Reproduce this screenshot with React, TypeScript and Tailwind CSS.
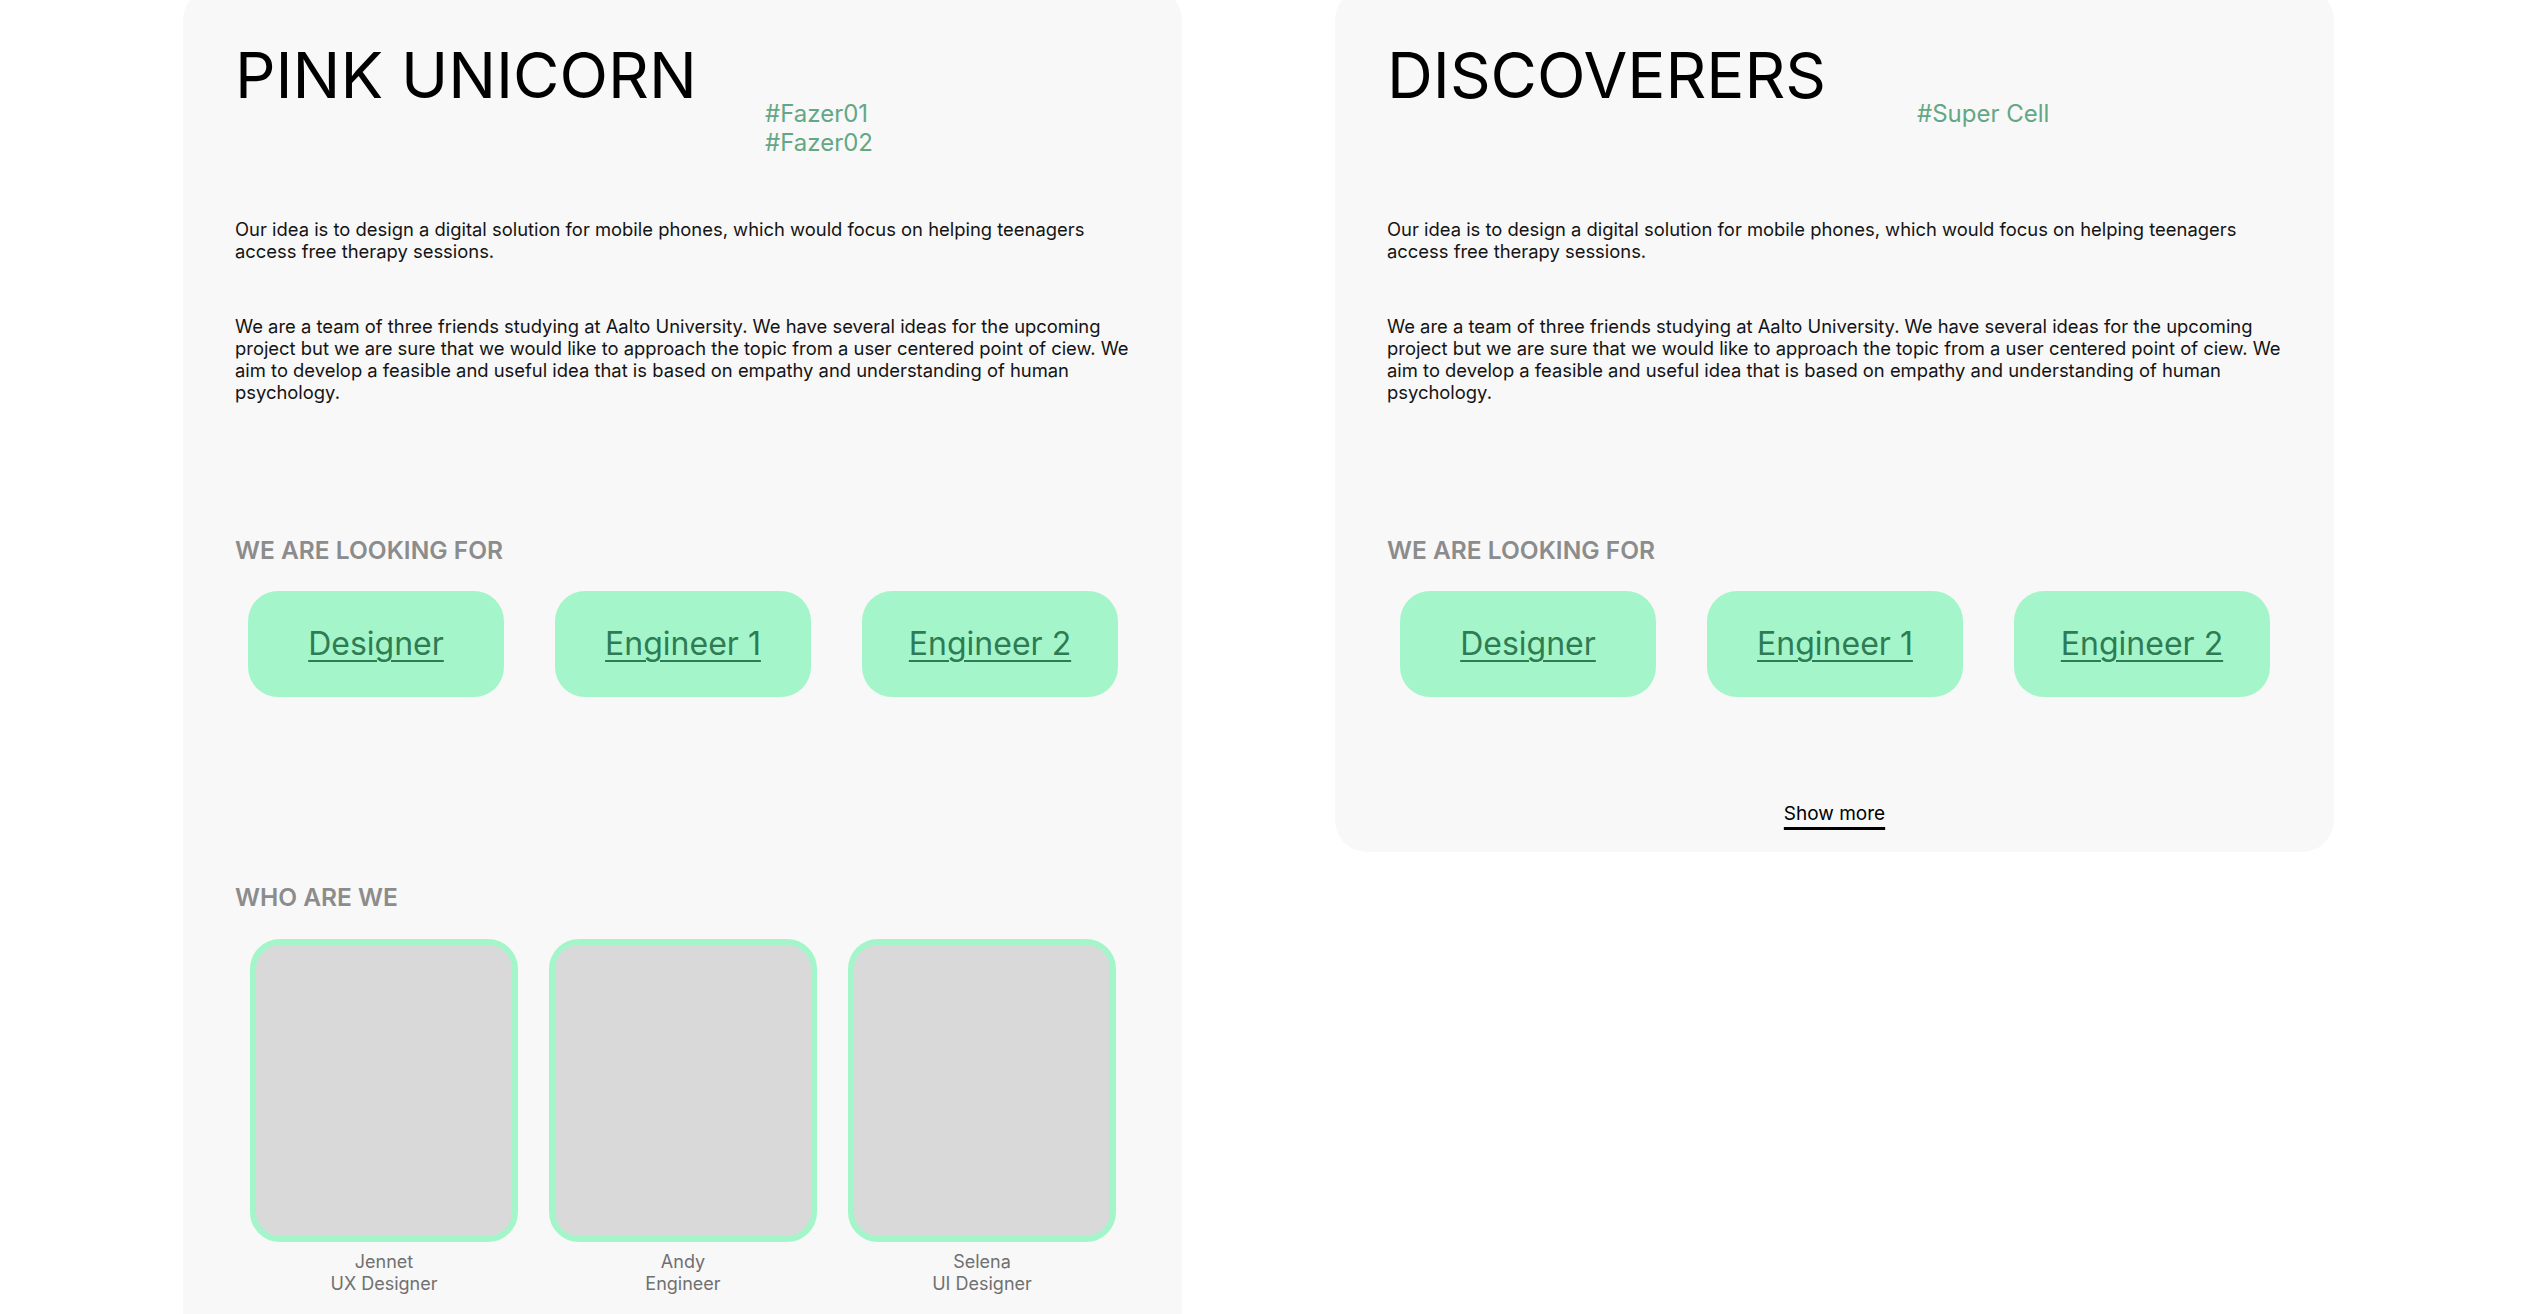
import React from "react";

const font = { fontFamily: "Inter, 'Noto Sans', sans-serif" };

function Header({ title, tags }: { title: string; tags: string[] }) {
  return (
    <div className="flex h-[175px] items-start">
      <div className="w-[530px] shrink-0 text-[63.5px] font-normal leading-none text-black">{title}</div>
      <div className="mt-[56px] text-[24px] leading-[29px] text-[#63a786]">
        {tags.map((t) => (
          <div key={t}>{t}</div>
        ))}
      </div>
    </div>
  );
}

function Paragraphs() {
  return (
    <div className="text-[18.4px] leading-[22px] text-[#141414]">
      <p className="whitespace-nowrap">
        Our idea is to design a digital solution for mobile phones, which would focus on helping teenagers
        <br />
        access free therapy sessions.
      </p>
      <p className="mt-[53px] whitespace-nowrap">
        We are a team of three friends studying at Aalto University. We have several ideas for the upcoming
        <br />
        project but we are sure that we would like to approach the topic from a user centered point of ciew. We
        <br />
        aim to develop a feasible and useful idea that is based on empathy and understanding of human
        <br />
        psychology.
      </p>
    </div>
  );
}

function SectionTitle({ children, className }: { children: React.ReactNode; className?: string }) {
  return (
    <div className={"text-[24.5px] font-semibold leading-[25px] text-[#8c8c8c] " + (className ?? "")}>
      {children}
    </div>
  );
}

function Roles() {
  const roles = ["Designer", "Engineer 1", "Engineer 2"];
  return (
    <div className="mt-[28px] flex gap-[51px] pl-[13px]">
      {roles.map((r) => (
        <div
          key={r}
          className="flex h-[106px] w-[256px] items-center justify-center rounded-[30px] bg-[#a4f6ca]"
        >
          <span className="text-[32px] leading-none text-[#2f7b54] underline decoration-2 underline-offset-[5px]">
            {r}
          </span>
        </div>
      ))}
    </div>
  );
}

function Members() {
  const people = [
    ["Jennet", "UX Designer"],
    ["Andy", "Engineer"],
    ["Selena", "UI Designer"],
  ];
  return (
    <div className="mt-[29px] flex gap-[31px] pl-[15px]">
      {people.map(([n, r]) => (
        <div key={n} className="flex w-[268px] flex-col items-center">
          <div className="h-[303px] w-[268px] rounded-[30px] border-[6px] border-[#a4f6ca] bg-[#d9d9d9]" />
          <div className="mt-[9px] text-center text-[18px] leading-[22px] text-[#707070]">
            <div>{n}</div>
            <div>{r}</div>
          </div>
        </div>
      ))}
    </div>
  );
}

export default function App() {
  return (
    <div className="h-[1314px] overflow-hidden bg-white" style={font}>
      <div className="-mt-[12px] flex items-start gap-[153px] pl-[183px]">
        <div className="w-[999px] shrink-0 rounded-[32px] bg-[#f8f8f8] px-[52px] pb-[80px] pt-[55px]">
          <Header title="PINK UNICORN" tags={["#Fazer01", "#Fazer02"]} />
          <Paragraphs />
          <SectionTitle className="mt-[135px]">WE ARE LOOKING FOR</SectionTitle>
          <Roles />
          <SectionTitle className="mt-[188px]">WHO ARE WE</SectionTitle>
          <Members />
        </div>
        <div className="flex h-[864px] w-[999px] shrink-0 flex-col rounded-[32px] bg-[#f8f8f8] px-[52px] pt-[55px]">
          <Header title="DISCOVERERS" tags={["#Super Cell"]} />
          <Paragraphs />
          <SectionTitle className="mt-[135px]">WE ARE LOOKING FOR</SectionTitle>
          <Roles />
          <div className="mt-[105px] flex justify-center">
            <span className="text-[19px] leading-[24px] text-black underline decoration-[3px] underline-offset-[7px]">
              Show more
            </span>
          </div>
        </div>
      </div>
    </div>
  );
}
